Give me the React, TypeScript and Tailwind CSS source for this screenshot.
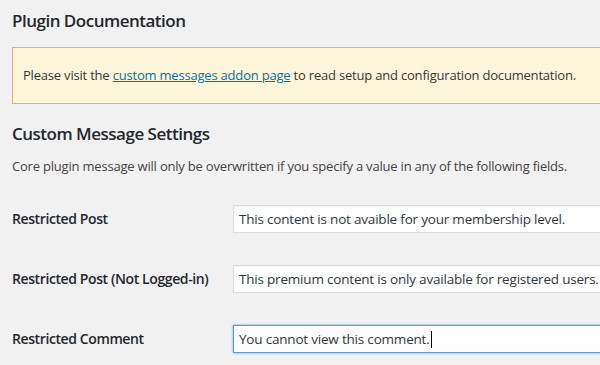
import React from "react";

const font = { fontFamily: '"Open Sans", "Noto Sans", "Liberation Sans", sans-serif' };

function Row({ label, value, focused, mt }: { label: string; value: string; focused?: boolean; mt: string }) {
  return (
    <div className={`flex items-center ${mt}`}>
      <div className="w-[221px] shrink-0 text-[14px] tracking-[-0.4px] font-semibold text-[#23282d] leading-[20px]">{label}</div>
      <div
        className={`h-[28px] w-[420px] shrink-0 bg-white flex items-center pl-[5px] text-[13.5px] tracking-[-0.2px] text-[#32373c] border ${
          focused
            ? "border-[#5b9dd9] shadow-[0_0_2px_rgba(30,140,190,0.8)]"
            : "border-[#dddddd] shadow-[inset_0_1px_2px_rgba(0,0,0,0.07)]"
        }`}
      >
        <span className="whitespace-nowrap">{value}</span>
        {focused && <span className="inline-block w-px h-[17px] bg-black ml-[1px]" />}
      </div>
    </div>
  );
}

export default function App() {
  return (
    <div className="w-[600px] h-[365px] overflow-hidden bg-[#f1f1f1] pl-3" style={font}>
      <h2 className="pt-[9px] text-[17px] tracking-[-0.5px] leading-[24px] font-semibold text-[#23282d]">Plugin Documentation</h2>
      <div className="mt-[14px] w-[620px] border border-[#dfb84f] bg-[#fef6da] px-[10px] py-[18px] text-[13px] tracking-[-0.2px] leading-[19px] text-[#32373c] whitespace-nowrap">
        Please visit the{" "}
        <span className="text-[#0073aa] underline">custom messages addon page</span> to read setup and configuration
        documentation.
      </div>
      <h2 className="mt-[18px] text-[17px] tracking-[-0.5px] leading-[24px] font-semibold text-[#23282d]">Custom Message Settings</h2>
      <p className="mt-[11px] text-[13px] tracking-[-0.2px] leading-[19px] text-[#444] whitespace-nowrap">
        Core plugin message will only be overwritten if you specify a value in any of the following fields.
      </p>
      <Row mt="mt-[29px]" label="Restricted Post" value="This content is not avaible for your membership level." />
      <Row mt="mt-[32px]" label="Restricted Post (Not Logged-in)" value="This premium content is only available for registered users." />
      <Row mt="mt-[32px]" label="Restricted Comment" value="You cannot view this comment." focused />
    </div>
  );
}
